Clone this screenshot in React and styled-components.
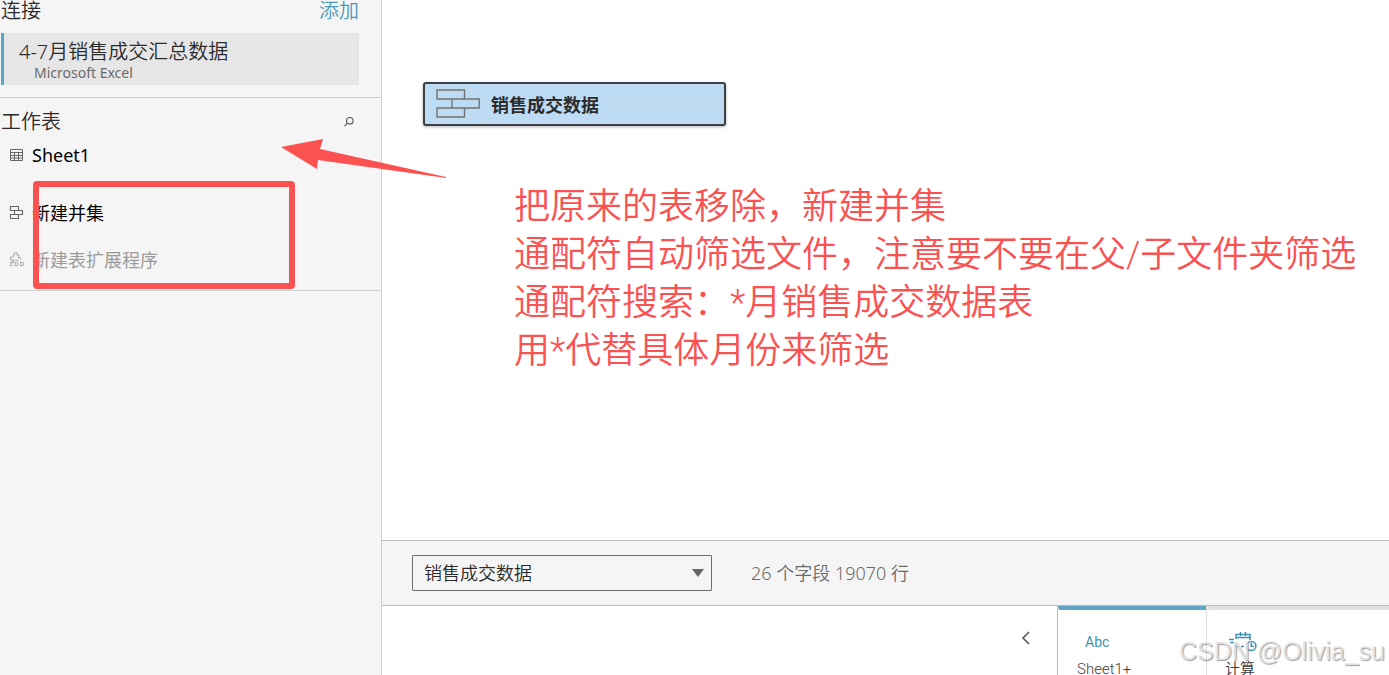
import React from 'react';
import styled, { createGlobalStyle } from 'styled-components';

const GlobalStyle = createGlobalStyle`
  * {
    box-sizing: border-box;
  }

  body {
    margin: 0;
    background-color: #fff;
    color: #2b2b2b;
    font-family: "Noto Sans", "Noto Sans CJK SC", sans-serif;
    font-weight: 400;
  }

  button, select {
    font-family: inherit;
  }
`;

const Page = styled.div`
  position: relative;
  display: flex;
  height: 100vh;
  overflow: hidden;
`;

const Sidebar = styled.aside`
  flex: 0 0 382px;
  border-right: 1px solid #cfcfcf;
  background-color: #f5f5f5;
`;

const Section = styled.section`
  padding: ${props => props.$pad};
  border-bottom: 1px solid #d0d0d0;
`;

const SectionHeader = styled.header`
  display: flex;
  align-items: center;
  justify-content: space-between;
  padding: 0 22px 0 1px;
`;

const SectionTitle = styled.h2`
  margin: 0;
  font-size: 20px;
  font-weight: 350;
  line-height: 22px;
`;

const AddLink = styled.a`
  color: #4a9ab8;
  font-size: 20px;
  font-weight: 350;
  line-height: 22px;
  text-decoration: none;
`;

const IconButton = styled.button`
  display: flex;
  align-items: center;
  justify-content: center;
  width: 20px;
  height: 24px;
  padding: 0;
  border: 0;
  background: none;
  color: #555;
`;

const Connection = styled.div`
  margin: 11px 22px 0 1px;
  padding: 7px 15px 3px;
  border-left: 3px solid #5fa5c5;
  background-color: #e6e6e6;
`;

const ConnectionName = styled.div`
  font-size: 20px;
  font-weight: 350;
  line-height: 24px;
`;

const ConnectionType = styled.div`
  padding-left: 15px;
  color: #6a6a6a;
  font-size: 14px;
  line-height: 18px;
`;

const List = styled.ul`
  margin: 0;
  padding: 0;
  list-style: none;
`;

const Item = styled.li`
  display: flex;
  align-items: center;
  height: ${props => props.$height}px;
  margin-bottom: ${props => props.$gap || 0}px;
  padding-left: 8px;
  color: ${props => (props.$disabled ? '#9b9b9b' : '#000')};
  font-size: 18px;
  line-height: 24px;

  svg {
    flex: none;
    margin-right: 8px;
    color: ${props => (props.$disabled ? '#b0b0b0' : '#666')};
  }
`;

const Main = styled.main`
  display: flex;
  flex: 1;
  flex-direction: column;
  min-width: 0;
`;

const Canvas = styled.div`
  flex: 1;
  padding: 82px 0 0 41px;
`;

const TableNode = styled.div`
  display: flex;
  align-items: center;
  width: 303px;
  height: 44px;
  padding-left: 11px;
  border: 2px solid #3c4146;
  border-radius: 3px;
  background-color: #bddbf3;
  box-shadow: 0 1px 3px rgba(0, 0, 0, .3);
  font-size: 18px;
  font-weight: 700;

  svg {
    margin-right: 11px;
  }
`;

const Note = styled.p`
  margin: 57px 0 0 91px;
  color: #fb5151;
  font-family: Roboto, "Noto Sans CJK SC", sans-serif;
  font-size: 36px;
  font-weight: 350;
  line-height: 48px;
  white-space: pre;
`;

const Toolbar = styled.div`
  display: flex;
  align-items: center;
  height: 66px;
  padding-left: 30px;
  border-top: 1px solid #bcbcbc;
  border-bottom: 1px solid #bcbcbc;
  background-color: #f5f5f5;
`;

const SelectWrapper = styled.div`
  position: relative;
  width: 300px;

  svg {
    position: absolute;
    top: 14px;
    right: 8px;
    pointer-events: none;
  }
`;

const Select = styled.select`
  width: 100%;
  height: 36px;
  padding: 0 11px;
  border: 1px solid #6e6e6e;
  border-radius: 1px;
  background-color: #f5f5f5;
  color: #2b2b2b;
  font-size: 18px;
  font-weight: 350;
  appearance: none;
`;

const Summary = styled.span`
  margin-left: 39px;
  color: #6a6a6a;
  font-size: 18px;
  font-weight: 350;
  line-height: 24px;
`;

const DataPane = styled.div`
  display: flex;
  height: 69px;
  overflow: hidden;
`;

const Collapse = styled.div`
  display: flex;
  flex: 1;
  justify-content: flex-end;
  padding: 20px 21px 0 0;
`;

const Fields = styled.table`
  width: 332px;
  border-left: 1px solid #bcbcbc;
  border-spacing: 0;
  table-layout: fixed;
`;

const Field = styled.th`
  width: ${props => props.$width};
  padding: 20px 0 0 18px;
  border-top: 4px solid ${props => (props.$active ? '#5fa5c5' : '#e0e0e0')};
  border-left: 1px solid ${props => (props.$active ? '#fff' : '#dcdcdc')};
  color: #3c3c3c;
  font-family: Roboto, "Noto Sans CJK SC", sans-serif;
  font-size: 15px;
  font-weight: 350;
  line-height: 22px;
  text-align: left;
  vertical-align: top;
`;

const FieldType = styled.div`
  display: flex;
  align-items: center;
  height: 24px;
  margin-bottom: 4px;
  padding-left: ${props => props.$indent}px;
  color: #3f93b0;
  font-size: 14px;
  font-weight: 400;
`;

const Highlight = styled.div`
  position: absolute;
  top: 181px;
  left: 33px;
  width: 262px;
  height: 108px;
  border: 6px solid #fb5151;
  border-radius: 4px;
`;

const ArrowMark = styled.svg`
  position: absolute;
  top: 137px;
  left: 280px;
`;

const Watermark = styled.div`
  position: absolute;
  right: 4px;
  bottom: 9px;
  color: rgba(232, 232, 232, .85);
  font-family: "Liberation Sans", sans-serif;
  font-size: 25px;
  line-height: 30px;
  text-shadow: 1px 1px 1px rgba(120, 120, 120, .7);
`;

const SearchIcon = () => (
  <svg width="12" height="12" viewBox="0 0 12 12" fill="none" stroke="currentColor" strokeWidth="1.1">
    <circle cx="6.8" cy="4.8" r="3.3" />
    <path d="M4.4 7.2L1.5 10.2" />
  </svg>
);

const GridIcon = () => (
  <svg width="16" height="16" viewBox="0 0 16 16" fill="none" stroke="currentColor">
    <path d="M2.5 2.5h12v11h-12zM2.5 5.5h12M2.5 8.5h12M2.5 11h12M6.5 5.5v8M10.5 5.5v8" />
  </svg>
);

const UnionIcon = () => (
  <svg width="16" height="16" viewBox="0 0 16 16" fill="none" stroke="currentColor" strokeWidth="1.1">
    <path d="M2.5 1.5h8v4h-8zM6.5 5.5h8v4h-8zM2.5 9.5h8v4h-8z" />
  </svg>
);

const ExtensionIcon = () => (
  <svg width="16" height="16" viewBox="0 0 16 16" fill="none" stroke="currentColor" strokeWidth="1.1" overflow="visible">
    <path d="M5.5 5V3H6.4a1.6 1.6 0 1 1 2.6 0h1.6v2.8a1.6 1.6 0 0 1 2.4 1.6M5.5 5H2.6v2.6a1.5 1.5 0 1 1 0 2.8V13.5H5" />
    <path d="M6 7.5L4.8 11.5M7 8.3h3.5" />
    <path d="M7.2 10.2h1.2a1.7 1.7 0 0 1 0 3.4H7.2zM12.6 10.2h1.2a1.7 1.7 0 0 1 0 3.4h-1.2z" />
  </svg>
);

const NodeIcon = () => (
  <svg width="44" height="30" viewBox="0 0 44 30" fill="none" stroke="#737373" strokeWidth="1.4">
    <path d="M1 1h27.5v9H1zM16 10h27.2v9H16zM1 19h27.5v9H1z" />
  </svg>
);

const ChevronIcon = () => (
  <svg width="10" height="14" viewBox="0 0 10 14" fill="none" stroke="#555" strokeWidth="1.6">
    <path d="M8 1L2 7l6 6" />
  </svg>
);

const CalcIcon = () => (
  <svg width="28" height="22" viewBox="0 0 28 22" fill="none" stroke="currentColor" strokeWidth="1.5">
    <path d="M7 8V3.5h14V9M7 6.5h14M11.5 1v4M16.5 1v4M0 8.5h5M1 11.5h4M7 11v4.5h3M12 15.5h3" />
    <circle cx="22.3" cy="15" r="4.6" />
    <path d="M22.3 12v3.2h2.5" />
  </svg>
);

export default function App() {
  return (
    <>
      <GlobalStyle />
      <Page>
        <Sidebar>
          <Section $pad="0 0 12px">
            <SectionHeader>
              <SectionTitle>连接</SectionTitle>
              <AddLink href="#add">添加</AddLink>
            </SectionHeader>
            <Connection>
              <ConnectionName>4-7月销售成交汇总数据</ConnectionName>
              <ConnectionType>Microsoft Excel</ConnectionType>
            </Connection>
          </Section>
          <Section $pad="12px 0 7px">
            <SectionHeader>
              <SectionTitle>工作表</SectionTitle>
              <IconButton aria-label="搜索">
                <SearchIcon />
              </IconButton>
            </SectionHeader>
            <List>
              <Item $height={42} $gap={13}><GridIcon />Sheet1</Item>
              <Item $height={47}><UnionIcon />新建并集</Item>
              <Item $height={47} $disabled><ExtensionIcon />新建表扩展程序</Item>
            </List>
          </Section>
        </Sidebar>
        <Main>
          <Canvas>
            <TableNode><NodeIcon />销售成交数据</TableNode>
            <Note>
              把原来的表移除，新建并集<br />
              通配符自动筛选文件，注意要不要在父/子文件夹筛选<br />
              通配符搜索：*月销售成交数据表<br />
              用*代替具体月份来筛选
            </Note>
          </Canvas>
          <Toolbar>
            <SelectWrapper>
              <Select aria-label="表">
                <option>销售成交数据</option>
              </Select>
              <svg width="12" height="8" viewBox="0 0 12 8">
                <path d="M0 0h12L6 8z" fill="#666" />
              </svg>
            </SelectWrapper>
            <Summary>26 个字段 19070 行</Summary>
          </Toolbar>
          <DataPane>
            <Collapse>
              <IconButton aria-label="折叠"><ChevronIcon /></IconButton>
            </Collapse>
            <Fields>
              <thead>
                <tr>
                  <Field $active $width="148px">
                    <FieldType $indent={8}>Abc</FieldType>
                    Sheet1+
                  </Field>
                  <Field>
                    <FieldType $indent={4}><CalcIcon /></FieldType>
                    计算
                  </Field>
                </tr>
              </thead>
            </Fields>
          </DataPane>
        </Main>
        <Highlight />
        <ArrowMark width="168" height="44" viewBox="0 0 168 44">
          <path d="M1 10L43 2L40 12L166 40V41L38 23L37 32Z" fill="#fb5151" />
        </ArrowMark>
        <Watermark>CSDN @Olivia_su</Watermark>
      </Page>
    </>
  );
}
